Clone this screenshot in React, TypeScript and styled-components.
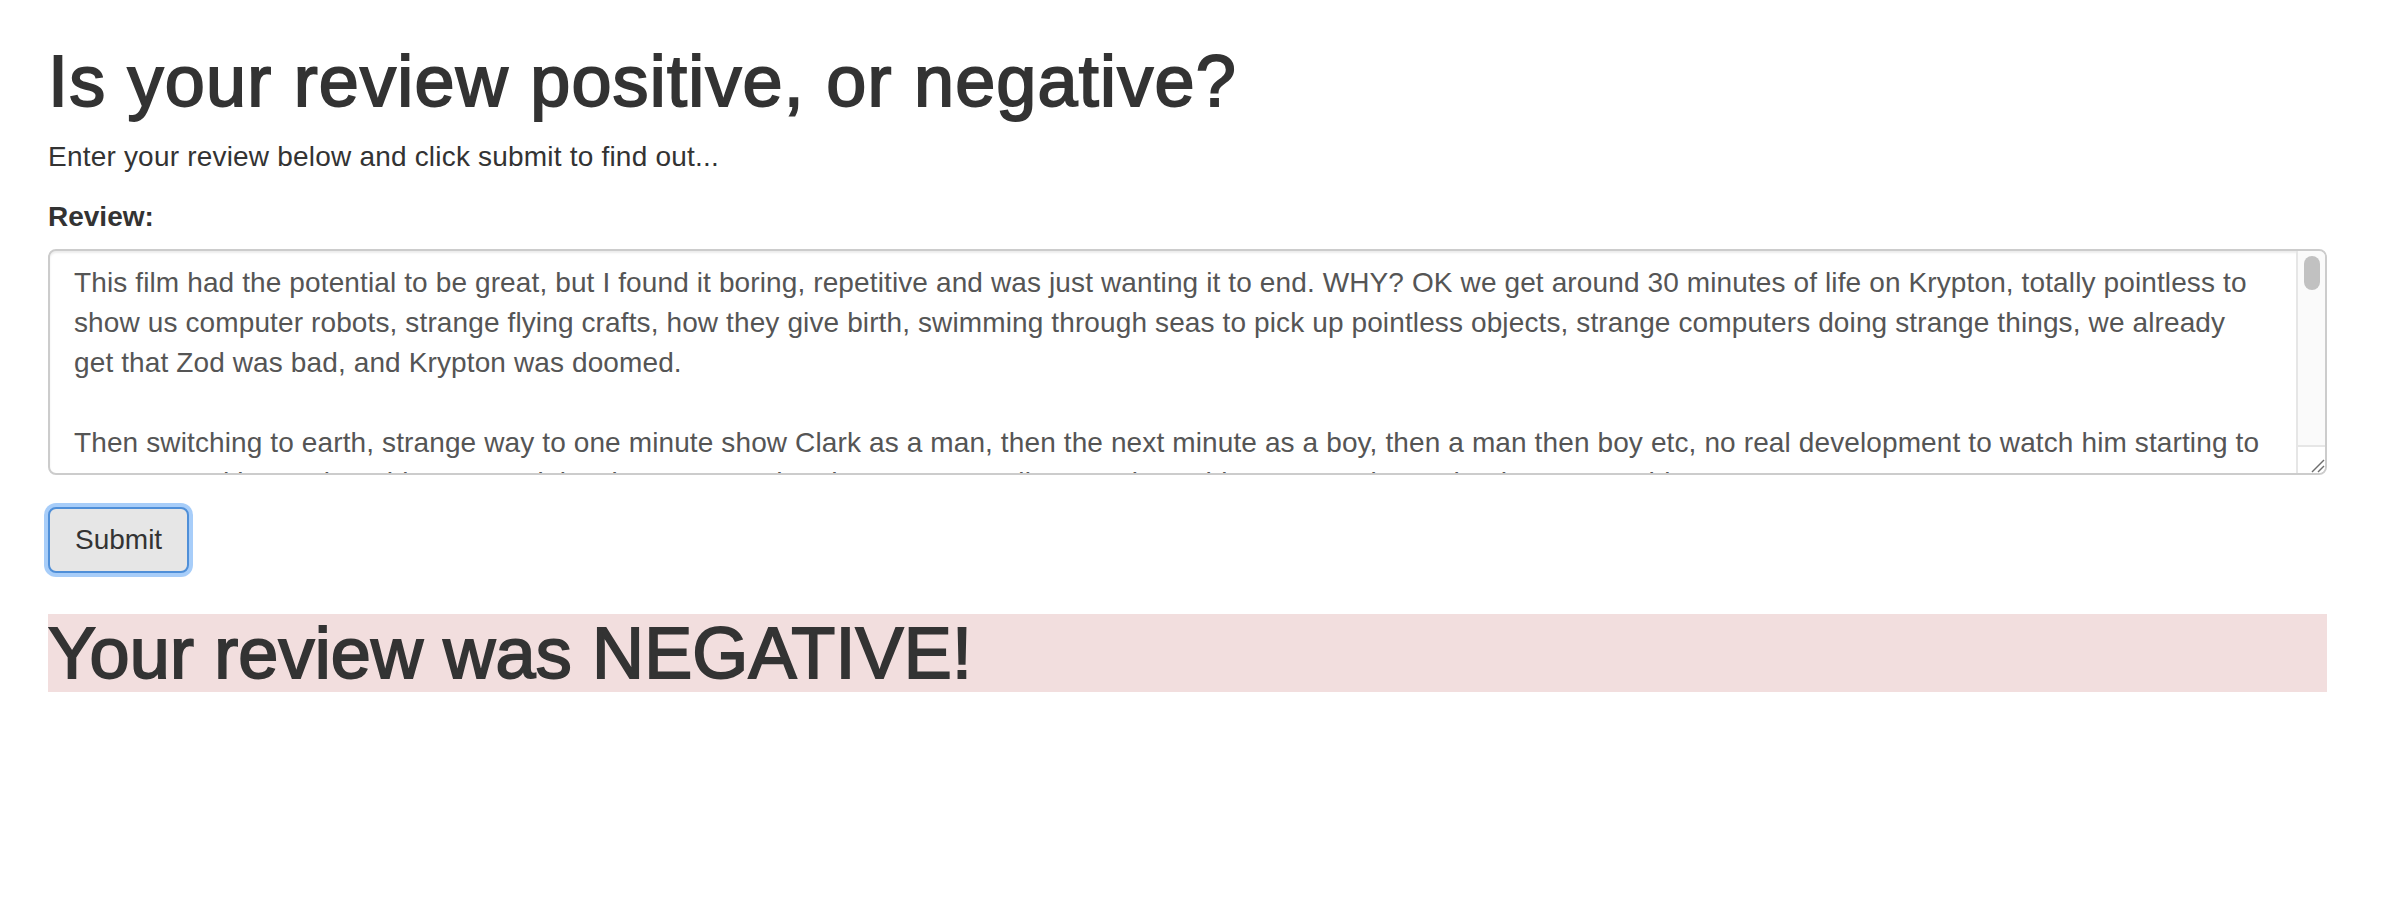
import React from "react";
import styled, { createGlobalStyle } from "styled-components";

const Global = createGlobalStyle`
  html, body { margin: 0; padding: 0; background: #ffffff; }
  body {
    font-family: "Liberation Sans", Arial, sans-serif;
    font-size: 28px;
    line-height: 40px;
    color: #333333;
  }
  * { box-sizing: border-box; }
`;

const Page = styled.div`
  padding: 42px 65px 0 48px;
  display: flex;
  flex-direction: column;
  align-items: flex-start;
`;

const Title = styled.h1`
  margin: 0 0 16px 0;
  font-size: 72px;
  line-height: 79.2px;
  font-weight: 400;
  letter-spacing: 1.2px;
  -webkit-text-stroke: 1.9px #333333;
  color: #333333;
`;

const Intro = styled.p`
  margin: 0 0 20px 0;
  font-size: 28px;
  line-height: 40px;
  letter-spacing: 0.2px;
`;

const Form = styled.form`
  display: flex;
  flex-direction: column;
  align-items: flex-start;
  align-self: stretch;
`;

const Label = styled.label`
  display: inline-block;
  font-weight: 700;
  font-size: 28px;
  line-height: 40px;
  margin-bottom: 12px;
`;

const Field = styled.div`
  position: relative;
  align-self: stretch;
  display: flex;
`;

const ReviewBox = styled.textarea`
  flex: 1;
  height: 226px;
  padding: 12px 54px 12px 24px;
  border: 2px solid #cccccc;
  border-radius: 8px;
  box-shadow: inset 0 2px 2px rgba(0, 0, 0, 0.075);
  font-family: "Liberation Sans", Arial, sans-serif;
  font-size: 28px;
  line-height: 40px;
  letter-spacing: 0.12px;
  color: #555555;
  background: #ffffff;
  resize: none;
  outline: none;
  overflow: hidden;
`;

const Gutter = styled.div`
  position: absolute;
  top: 2px;
  right: 2px;
  bottom: 2px;
  width: 29px;
  display: flex;
  flex-direction: column;
  border-left: 2px solid #e6e6e6;
  border-radius: 0 6px 6px 0;
  overflow: hidden;
  pointer-events: none;
`;

const Track = styled.div`
  flex: 1;
  background: #fafafa;
  padding: 5px 5px 0 6px;
`;

const Thumb = styled.div`
  width: 16px;
  height: 34px;
  border-radius: 8px;
  background: #c1c1c1;
`;

const Corner = styled.div`
  height: 28px;
  background: #ffffff;
  border-top: 2px solid #e6e6e6;
  display: flex;
  justify-content: flex-end;
  align-items: flex-end;
`;

const SubmitButton = styled.button`
  margin-top: 32px;
  height: 66px;
  padding: 0 25px;
  font-family: "Liberation Sans", Arial, sans-serif;
  font-size: 28px;
  line-height: 40px;
  color: #333333;
  background: #e6e6e6;
  border: 2px solid #4f8fd8;
  border-radius: 8px;
  box-shadow: 0 0 0 4px rgba(120, 178, 246, 0.65);
  cursor: pointer;
`;

const Result = styled.h1<{ $tone: "negative" | "positive" }>`
  align-self: stretch;
  margin: 41px 0 0 0;
  font-size: 72px;
  line-height: 78px;
  font-weight: 400;
  letter-spacing: 0.15px;
  -webkit-text-stroke: 1.9px #333333;
  color: #333333;
  background: ${(p) => (p.$tone === "negative" ? "#f2dede" : "#dff0d8")};
`;

const reviewText = `This film had the potential to be great, but I found it boring, repetitive and was just wanting it to end. WHY? OK we get around 30 minutes of life on Krypton, totally pointless to show us computer robots, strange flying crafts, how they give birth, swimming through seas to pick up pointless objects, strange computers doing strange things, we already get that Zod was bad, and Krypton was doomed.

Then switching to earth, strange way to one minute show Clark as a man, then the next minute as a boy, then a man then boy etc, no real development to watch him starting to grow up and learn about his powers, it just jumps around and you never really get to know him or care about what happens to him.

Then the fighting, oh the fighting, it went on and on and on, buildings smashed, people thrown through walls, the same punches over and over, it was like watching someone else play a video game for an hour. No tension, no sense of danger, just noise and explosions until you stop caring who wins.

The acting was fine, the music was loud, and the effects were impressive at times, but none of that matters if the story is this weak. I left the cinema tired rather than entertained.

Overall a big disappointment, I really wanted to like it but I could not wait for it to finish. Would not recommend, and would not watch it again.`;

export default function App() {
  return (
    <>
      <Global />
      <Page>
        <Title>Is your review positive, or negative?</Title>
        <Intro>Enter your review below and click submit to find out...</Intro>
        <Form onSubmit={(e) => e.preventDefault()}>
          <Label htmlFor="review">Review:</Label>
          <Field>
            <ReviewBox id="review" defaultValue={reviewText} spellCheck={false} />
            <Gutter>
              <Track>
                <Thumb />
              </Track>
              <Corner>
                <svg width="16" height="16" viewBox="0 0 16 16">
                  <line x1="3" y1="15" x2="15" y2="3" stroke="#6e6e6e" strokeWidth="1.4" />
                  <line x1="9" y1="15" x2="15" y2="9" stroke="#6e6e6e" strokeWidth="1.4" />
                </svg>
              </Corner>
            </Gutter>
          </Field>
          <SubmitButton type="submit">Submit</SubmitButton>
        </Form>
        <Result $tone="negative">Your review was NEGATIVE!</Result>
      </Page>
    </>
  );
}
